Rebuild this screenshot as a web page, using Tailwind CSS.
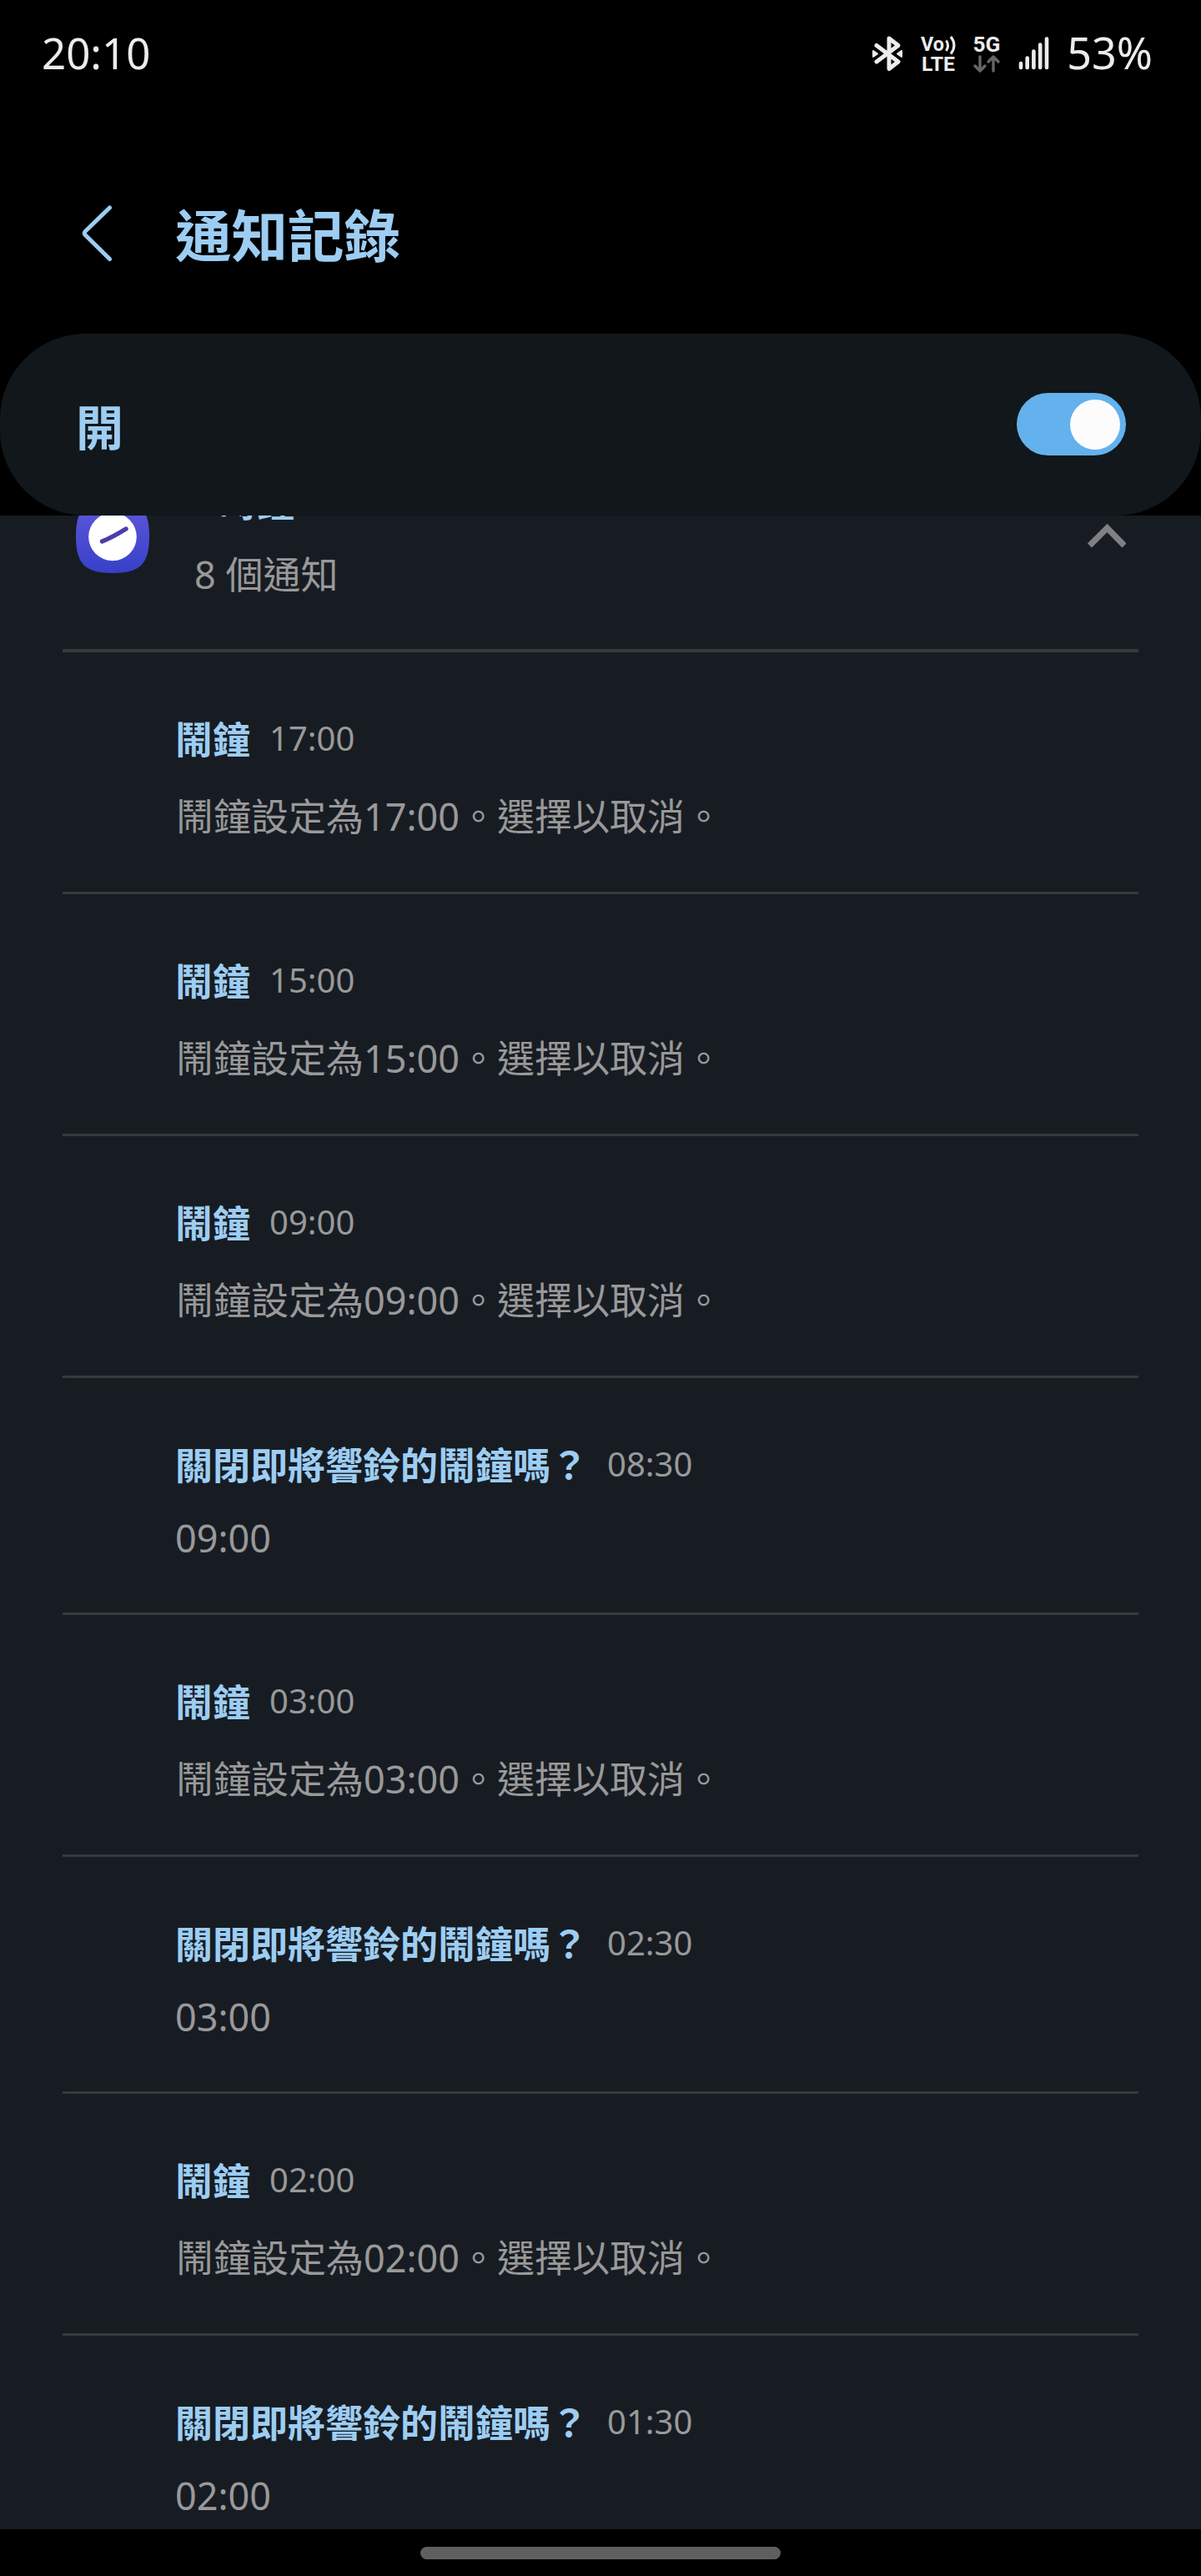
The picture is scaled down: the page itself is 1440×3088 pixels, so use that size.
<!DOCTYPE html>
<html lang="zh-Hant">
<head>
  <meta charset="UTF-8" />
  <meta name="viewport" content="width=device-width, initial-scale=1" />
  <title>通知記錄</title>
  <script src="https://cdn.jsdelivr.net/npm/@tailwindcss/browser@4"></script>
</head>
<body class="bg-black font-['Noto_Sans','Noto_Sans_CJK_TC',sans-serif]">
  <div class="w-[1440px] h-[3088px] flex flex-col overflow-hidden">

    <!-- Status bar -->
    <div class="h-[124px] shrink-0 flex items-center justify-between pl-[50px] pr-[58px] pt-px text-[51px] leading-[60px] text-[#ececec]">
      <span>20:10</span>
      <div class="flex items-center">
        <svg class="w-[230px] h-[60px] mr-[9px] -mt-px" viewBox="1040 32 230 60" fill="none">
          <!-- Bluetooth -->
          <path d="M1051 54.500 L1077 74 L1066 82.500 V46 L1077 54.500 L1051 74" stroke="#ececec" stroke-width="5" stroke-linejoin="round" stroke-linecap="round" />
          <path d="M1047 61 L1052 64.500 L1047 68 Z M1081 61 L1076 64.500 L1081 68 Z" fill="#ececec" stroke="#ececec" stroke-width="2" stroke-linejoin="round" />
          <!-- VoLTE -->
          <text x="1104" y="61" font-family="Roboto" font-weight="700" font-size="24" textLength="28" lengthAdjust="spacingAndGlyphs" fill="#ececec">Vo</text>
          <path d="M1134.500 48.500 Q1138.500 54.500 1134.500 61 M1140 44 Q1148 54.500 1140 64.500" stroke="#ececec" stroke-width="3" />
          <text x="1105" y="85" font-family="Roboto" font-weight="700" font-size="24" textLength="40" lengthAdjust="spacingAndGlyphs" fill="#ececec">LTE</text>
          <!-- 5G -->
          <text x="1166.500" y="62" font-family="Roboto" font-weight="700" font-size="26.500" textLength="33" lengthAdjust="spacingAndGlyphs" fill="#ececec">5G</text>
          <path d="M1175 68 V84 M1169 79 L1175 85 L1181 79 M1191 85 V69 M1185 74 L1191 68 L1197 74" stroke="#666" stroke-width="3.400" stroke-linejoin="round" stroke-linecap="round" />
          <!-- Signal -->
          <path d="M1224 76 V81 M1231.700 69.500 V81 M1239.400 61.500 V81 M1247.200 53.500 V81 M1255 46.500 V81" stroke="#ececec" stroke-width="4.600" stroke-linecap="round" />
        </svg>
        <span class="text-[52px]">53%</span>
      </div>
    </div>

    <!-- Title -->
    <header class="h-[276px] shrink-0 flex items-start pt-[121px] pl-[96px] text-[#9dcdf2]">
      <svg class="w-[40px] h-[72px] mr-[74px]" viewBox="0 0 40 72" fill="none">
        <path d="M35.500 4 L6.500 32 Q4 34.500 6.500 37 L35.500 65.500" stroke="currentColor" stroke-width="5" stroke-linecap="round" stroke-linejoin="round" />
      </svg>
      <h1 class="text-[67.5px] leading-[80px] font-bold -mt-[3px]">通知記錄</h1>
    </header>

    <!-- Main switch -->
    <div class="h-[218px] shrink-0 rounded-[102px] bg-[#11171a] flex items-center justify-between pl-[91px] pr-[90px]">
      <span class="text-[57px] leading-[60px] font-bold text-[#9dcdf2] pt-[6px]">開</span>
      <div class="w-[131px] h-[75px] -mt-px rounded-full bg-[#63b1ed] flex items-center justify-end pr-[7px]">
        <div class="size-[60px] rounded-full bg-[#fcfcfc]"></div>
      </div>
    </div>

    <!-- Notification list, scrolled under the switch -->
    <main class="h-[2414px] shrink-0 bg-[#171c23] overflow-hidden px-[75px] text-[45px] leading-[60px] text-[#999]">
      <div class="h-[164px] border-b-4 border-[#39393b] flex items-start pl-[16px] pr-[15px]">
        <svg class="w-[88px] h-[88px] -mt-[19px] mr-[54px]" viewBox="0 0 88 88">
          <defs>
            <linearGradient id="clock" x1="0" y1="0" x2="0" y2="1">
              <stop offset="0" stop-color="#6058dc" />
              <stop offset="1" stop-color="#3740c8" />
            </linearGradient>
          </defs>
          <path d="M44 0 C77 0 88 11 88 44 C88 77 77 88 44 88 C11 88 0 77 0 44 C0 11 11 0 44 0 Z" fill="url(#clock)" />
          <circle cx="44" cy="44.500" r="28.800" fill="#fff" />
          <path d="M31.500 50 Q44 45 60 35" fill="none" stroke="#4a3fa8" stroke-width="5.400" stroke-linecap="round" />
        </svg>
        <div class="-mt-[45px] flex-1">
          <h2 class="font-bold text-[#9dcdf2] pl-[30px]">時鐘</h2>
          <p class="mt-[26px]">8 個通知</p>
        </div>
        <svg class="w-[46px] h-[30px] mt-[10px]" viewBox="0 0 46 30" fill="none">
          <path d="M2.500 26 L23.500 5 L44 26" stroke="#808084" stroke-width="7.300" />
        </svg>
      </div>

      <article class="h-[290px] border-b-3 border-[#39393b] pt-[75px] pl-[136px]">
        <div class="flex items-start gap-[23px] -ml-px">
          <h3 class="font-bold text-[#9dcdf2]">鬧鐘</h3>
          <time class="text-[40px] -mt-[2px]">17:00</time>
        </div>
        <p class="mt-[32px]">鬧鐘設定為17:00。選擇以取消。</p>
      </article>

      <article class="h-[290px] border-b-3 border-[#39393b] pt-[75px] pl-[136px]">
        <div class="flex items-start gap-[23px] -ml-px">
          <h3 class="font-bold text-[#9dcdf2]">鬧鐘</h3>
          <time class="text-[40px] -mt-[2px]">15:00</time>
        </div>
        <p class="mt-[32px]">鬧鐘設定為15:00。選擇以取消。</p>
      </article>

      <article class="h-[290px] border-b-3 border-[#39393b] pt-[75px] pl-[136px]">
        <div class="flex items-start gap-[23px] -ml-px">
          <h3 class="font-bold text-[#9dcdf2]">鬧鐘</h3>
          <time class="text-[40px] -mt-[2px]">09:00</time>
        </div>
        <p class="mt-[32px]">鬧鐘設定為09:00。選擇以取消。</p>
      </article>

      <article class="h-[284px] border-b-3 border-[#39393b] pt-[75px] pl-[135px]">
        <div class="flex items-start gap-[23px]">
          <h3 class="font-bold text-[#9dcdf2]">關閉即將響鈴的鬧鐘嗎？</h3>
          <time class="text-[40px] -mt-[2px]">08:30</time>
        </div>
        <p class="mt-[27px]">09:00</p>
      </article>

      <article class="h-[290px] border-b-3 border-[#39393b] pt-[75px] pl-[136px]">
        <div class="flex items-start gap-[23px] -ml-px">
          <h3 class="font-bold text-[#9dcdf2]">鬧鐘</h3>
          <time class="text-[40px] -mt-[2px]">03:00</time>
        </div>
        <p class="mt-[32px]">鬧鐘設定為03:00。選擇以取消。</p>
      </article>

      <article class="h-[284px] border-b-3 border-[#39393b] pt-[75px] pl-[135px]">
        <div class="flex items-start gap-[23px]">
          <h3 class="font-bold text-[#9dcdf2]">關閉即將響鈴的鬧鐘嗎？</h3>
          <time class="text-[40px] -mt-[2px]">02:30</time>
        </div>
        <p class="mt-[27px]">03:00</p>
      </article>

      <article class="h-[290px] border-b-3 border-[#39393b] pt-[75px] pl-[136px]">
        <div class="flex items-start gap-[23px] -ml-px">
          <h3 class="font-bold text-[#9dcdf2]">鬧鐘</h3>
          <time class="text-[40px] -mt-[2px]">02:00</time>
        </div>
        <p class="mt-[32px]">鬧鐘設定為02:00。選擇以取消。</p>
      </article>

      <article class="h-[284px] pt-[75px] pl-[135px]">
        <div class="flex items-start gap-[23px]">
          <h3 class="font-bold text-[#9dcdf2]">關閉即將響鈴的鬧鐘嗎？</h3>
          <time class="text-[40px] -mt-[2px]">01:30</time>
        </div>
        <p class="mt-[27px]">02:00</p>
      </article>
    </main>

    <!-- Gesture bar -->
    <div class="h-[56px] shrink-0 flex items-start justify-center pt-[21px]">
      <div class="w-[432px] h-[15px] rounded-full bg-[#5f5f5f]"></div>
    </div>
  </div>
</body>
</html>
